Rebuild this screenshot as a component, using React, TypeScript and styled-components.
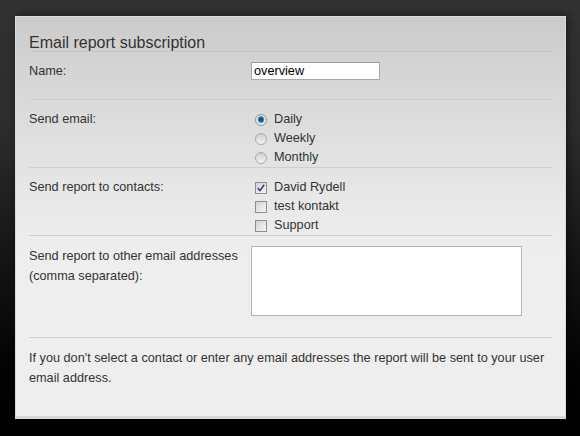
import React from 'react';
import styled, { createGlobalStyle } from 'styled-components';

const GlobalStyle = createGlobalStyle`
  html, body {
    margin: 0;
    padding: 0;
  }
  body {
    width: 580px;
    height: 436px;
    overflow: hidden;
    background: linear-gradient(to bottom, #323232 0%, #2c2c2c 30%, #141414 60%, #030303 85%, #000 100%);
    font-family: 'Liberation Sans', Arial, sans-serif;
  }
`;

const Page = styled.div`
  padding: 16px 0 0 15px;
`;

const Panel = styled.section`
  box-sizing: border-box;
  width: 551px;
  padding: 0 13px 0 13px;
  border: 1px solid #dadada;
  border-bottom: 3px solid #d6d6d6;
  background: linear-gradient(to bottom, #cbcbcb 0%, #dadada 22%, #e8e8e8 45%, #eeeeee 60%, #eeeeee 100%);
  box-shadow: 2px 0 8px rgba(0, 0, 0, 0.45);
  color: #333;
`;

const Title = styled.h2`
  margin: 0;
  padding-top: 17px;
  font-size: 16px;
  line-height: 17px;
  font-weight: normal;
  color: #333;
  border-bottom: 1px solid #c6c6c6;
`;

const Row = styled.div<{ $top: number; $bottom: number }>`
  display: grid;
  grid-template-columns: 222px 1fr;
  padding: ${(p) => p.$top}px 0 ${(p) => p.$bottom}px;
  border-bottom: 1px solid #cfcfcf;
  font-size: 12.7px;
`;

const Label = styled.div<{ $lh: number }>`
  line-height: ${(p) => p.$lh}px;
  color: #333;
`;

const TextInput = styled.input`
  box-sizing: border-box;
  width: 129px;
  height: 18px;
  margin: 0;
  padding: 0 2px;
  border: 1px solid #a9a9a9;
  border-top-color: #9a9a9a;
  background: #fff;
  font-family: 'Liberation Sans', Arial, sans-serif;
  font-size: 12.7px;
  color: #000;
  outline: none;
`;

const TextArea = styled.textarea`
  box-sizing: border-box;
  display: block;
  width: 271px;
  height: 70px;
  margin: 0;
  padding: 2px;
  border: 1px solid #b4b4b4;
  background: #fff;
  resize: none;
  font-family: 'Liberation Sans', Arial, sans-serif;
  font-size: 13px;
  outline: none;
`;

const OptionList = styled.div`
  display: flex;
  flex-direction: column;
`;

const Option = styled.label<{ $lh: number }>`
  display: flex;
  align-items: center;
  height: ${(p) => p.$lh}px;
  line-height: ${(p) => p.$lh}px;
  color: #333;
`;

const RadioDot = styled.span<{ $on: boolean }>`
  box-sizing: border-box;
  width: 12px;
  height: 12px;
  margin: 0 7px 0 4px;
  border-radius: 50%;
  border: 1px solid ${(p) => (p.$on ? '#959595' : '#aaaaaa')};
  background: ${(p) =>
    p.$on
      ? 'radial-gradient(circle at 50% 45%, #0b3a5c 0, #1c6a9a 2px, #3f8fbf 3px, #e4e4e4 3.6px, #f2f2f2 100%)'
      : 'linear-gradient(to bottom, #cfcfcf, #f2f2f2)'};
`;

const CheckBox = styled.span`
  box-sizing: border-box;
  width: 12px;
  height: 12px;
  margin: 0 7px 0 4px;
  border: 1px solid #8e8e8e;
  background: linear-gradient(135deg, #d2d2d2, #f6f6f6);
  display: flex;
  align-items: center;
  justify-content: center;
`;

const Note = styled.p`
  margin: 0;
  padding: 10px 0 28px;
  font-size: 12.7px;
  line-height: 20px;
  color: #333;
`;

const Tick = () => (
  <svg width="10" height="10" viewBox="0 0 10 10">
    <path d="M1.8 5 L4 7.6 L8.2 1.8" fill="none" stroke="#34348f" strokeWidth="1.5" />
  </svg>
);

const frequencies = [
  { label: 'Daily', on: true },
  { label: 'Weekly', on: false },
  { label: 'Monthly', on: false },
];

const contacts = [
  { label: 'David Rydell', on: true },
  { label: 'test kontakt', on: false },
  { label: 'Support', on: false },
];

const App: React.FC = () => {
  return (
    <>
      <GlobalStyle />
      <Page>
        <Panel>
          <Title>Email report subscription</Title>

          <Row $top={10} $bottom={19}>
            <Label $lh={18}>Name:</Label>
            <div>
              <TextInput defaultValue="overview" />
            </div>
          </Row>

          <Row $top={10} $bottom={0}>
            <Label $lh={19}>Send email:</Label>
            <OptionList>
              {frequencies.map((f) => (
                <Option key={f.label} $lh={19}>
                  <RadioDot $on={f.on} />
                  {f.label}
                </Option>
              ))}
            </OptionList>
          </Row>

          <Row $top={10} $bottom={0}>
            <Label $lh={19}>Send report to contacts:</Label>
            <OptionList>
              {contacts.map((c) => (
                <Option key={c.label} $lh={19}>
                  <CheckBox>{c.on && <Tick />}</CheckBox>
                  {c.label}
                </Option>
              ))}
            </OptionList>
          </Row>

          <Row $top={10} $bottom={21}>
            <Label $lh={20}>
              Send report to other email addresses
              <br />
              (comma separated):
            </Label>
            <div>
              <TextArea />
            </div>
          </Row>

          <Note>
            If you don't select a contact or enter any email addresses the report will be sent to your user email
            address.
          </Note>
        </Panel>
      </Page>
    </>
  );
};

export default App;
